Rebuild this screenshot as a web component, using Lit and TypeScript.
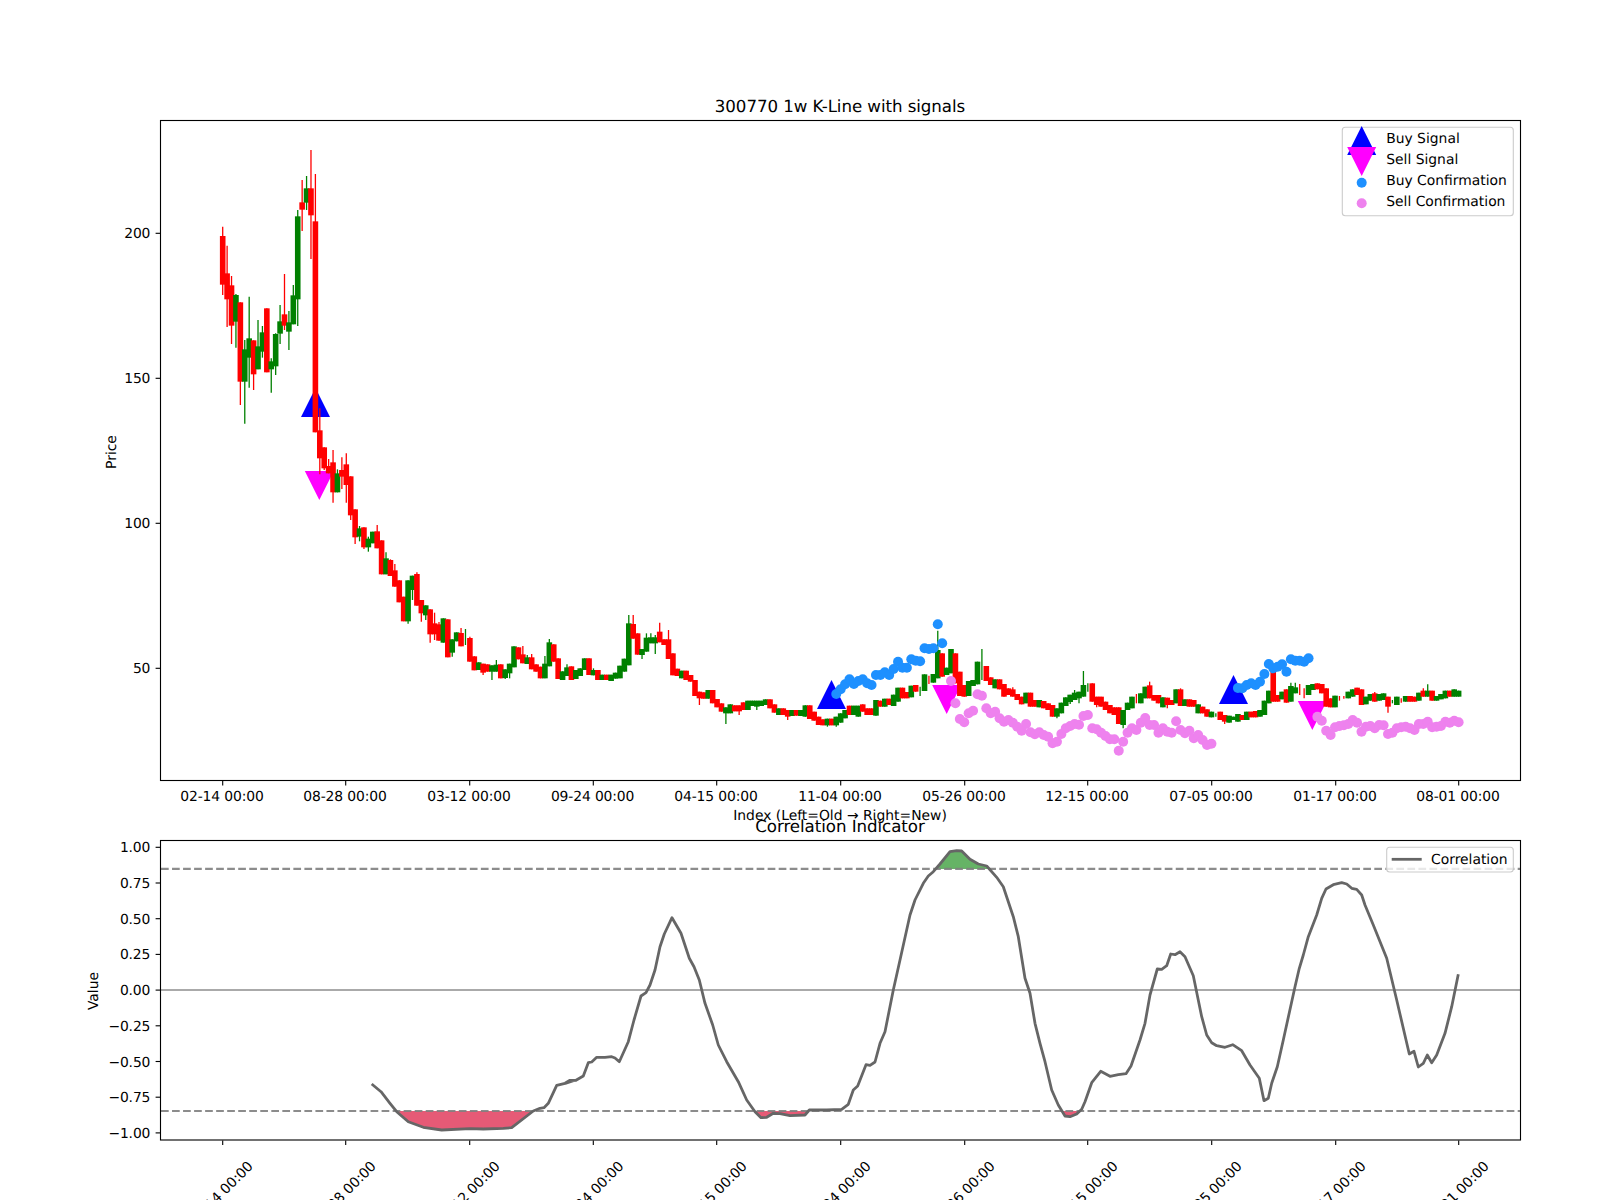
import { LitElement, html, svg, css } from "lit";
import { customElement } from "lit/decorators.js";

type Raw = [number, number, number, number?, number?];
const xAt = (i: number) => 222.7 + 4.414 * i;

// [red?, bodyTop, bodyBottom, wickTop, wickBottom] read off the chart; y in crop units (px = base + v / 3)
const A: Raw[] = [
  [1,438,584,410,615],[1,550,628,467,711],[1,586,707,558,762],[0,615,695,612,773],[1,637,875,637,945],
  [0,778,875,750,1001],[0,745,803,620,893],[1,751,853,751,900],[0,769,838,690,838],[0,727,785,708,803],
  [1,655,847],[0,814,838,805,908],[0,732,829,730,855],[0,694,731,645,762],[1,673,707,552,720],
  [0,697,725,663,780],[0,616,703,585,703],[0,379,628,360,708],[1,337,359,270,423],[0,295,338,258,360],
  [1,295,376,180,507],
];
const B: Raw[] = [
  [1,-476,157,-618,157],[1,151,235,85,283],[1,202,265,202,270],[1,258,280,237,280],[1,247,337,210,368],
  [0,280,337,268,337],[1,270,290,232,327],[1,253,315,220,368],[1,289,406,289,420],[1,388,472,388,492],
  [0,445,470,438,484],[1,442,502,442,507],[0,476,502,470,515],[0,455,490],[1,454,505,435,505],
  [1,481,583],[0,535,583,517,583],[1,540,588,538,588],[1,571,620,552,620],[1,601,667],
  [1,650,724],[0,601,724,601,731],[0,587,630,587,660],[1,582,677,577,677],[1,660,700,660,725],
  [0,676,706,676,720],[1,688,763,688,788],[1,730,763,698,780],[1,733,782,726,782],[0,715,788],
  [1,718,832],[0,778,818,778,830],[0,757,784],[1,759,799,744,799],[0,770,770,747,795],
  [1,774,845,770,845],[1,829,871],[0,847,870],[1,851,878,851,885],[1,853,875],
  [0,856,875,856,900],[0,854,875,840,875],[1,853,895],[0,868,894,868,897],[0,851,880,851,895],
  [0,799,862],[1,802,838],[1,823,850,798,850],[0,832,852,825,852],[1,832,868,822,868],
  [1,853,875],[1,860,895],[0,851,895,828,895],[0,787,859,777,859],[1,793,845],
  [1,835,897],[0,874,900],[0,862,888,853,888],[1,859,900],[0,870,897],
  [0,865,888],[0,835,870],[1,835,885],[0,870,886,865,886],[1,870,900],
];
const C: Raw[] = [
  [0,224,240],[1,224,240],[0,224,243],[0,218,236],[0,197,235],[0,176,215],[0,70,196,45,196],[1,72,116,45,116],
  [1,100,164],[0,147,165,147,177],[0,113,155,100,155],[0,112,130,100,130],[0,112,130,105,162],[1,95,127,68,127],[1,118,135],[1,118,177,90,177],
  [1,160,226],[1,206,228],[0,212,235],[1,212,240],[1,225,245],[1,240,288],[1,275,295,275,315],[1,277,296],
  [0,270,296],[1,270,310],[1,297,322],[1,310,335],[0,322,340,322,372],[0,313,340],[1,316,334],[1,316,334,316,345],
  [1,307,330],[0,302,330],[0,302,318],[0,302,320,302,330],[0,302,318],[0,298,315],[1,298,325],[1,313,338],
  [0,325,345],[1,325,345],[1,330,350,330,360],[0,330,348],[1,330,347],[0,330,348],[0,316,350],[1,316,357],
  [1,335,362],[1,350,375],[1,358,376],[0,356,376,356,380],[1,356,376],[0,350,376,350,380],[0,340,368],[0,330,355],
  [1,317,345],[0,317,345],[0,317,350],[1,313,335],[1,325,345],[1,325,345],[0,300,347],[1,302,320],
  [0,296,320],[1,296,315],[0,284,318],[0,263,305],[1,263,295],[1,276,295],[0,257,292],[1,255,275],
  [0,270,270,260,288],[0,223,273],[1,240,240,227,252],[0,222,248],[0,150,235,92,235],[1,160,230],[0,203,225],[0,147,220],
  [1,160,250],[1,215,288],[1,255,290],[0,243,288],[0,240,258],[0,185,253],[0,200,200,147,240],[1,198,243],
  [1,232,255],[0,238,265],
];
const D: Raw[] = [
  [1,238,268],[1,252,290],[1,265,285],[1,268,290,262,290],[1,282,300],[1,290,313],[0,278,310],[1,278,320],
  [1,300,320],[0,300,322],[1,303,325],[1,310,330],[1,315,350],[0,325,350,325,355],[0,308,340],[0,292,318],
  [0,284,306,284,312],[0,278,300,270,300],[0,275,295,275,310],[0,255,290,213,290],[0,262,262,250,275],[1,250,305],[1,290,315,290,322],[1,290,320],
  [1,305,330],[1,315,340],[1,322,345],[1,322,372],[0,330,375,330,385],[0,308,330],[0,290,325],[1,295,295,282,310],
  [0,280,310],[0,260,295],[1,256,295,245,295],[1,285,302],[1,285,310],[0,292,322],[1,293,315,293,325],[1,300,315],
  [0,268,310],[1,268,318,265,318],[0,298,318],[1,298,320],[1,300,320],[0,313,340],[1,320,340],[1,328,350],
  [0,335,352],[0,345,345,340,350],[1,335,360],[1,345,365,345,372],[0,347,368],[0,350,360],[0,342,365],[1,345,360],
  [0,335,360],[1,335,352],[1,333,352],[0,330,350],[0,302,345],[0,272,310],[1,210,305],[1,285,305],
  [0,275,298],[1,268,308],[0,258,305,248,305],[0,262,280,248,280],[1,270,270,252,285],[1,280,280,265,295],[0,255,285],[0,252,270],
  [1,250,268],[1,252,280],[1,265,320],[1,295,322],[0,287,322],[1,295,295,288,302],[1,292,292,288,296],[0,275,295],
  [0,268,290],[1,263,285],[1,268,315],[0,290,313],[0,282,302],[1,280,305,276,305],[0,282,302],[0,280,300],
  [1,290,320,290,338],[0,305,305,300,310],[0,290,315],[1,300,300,295,308],[0,288,305],[1,288,305],[1,290,305],[0,278,302],
  [1,272,290,265,290],[0,272,290,253,290],[1,272,302],[0,288,302],[0,282,298],[0,272,295],[1,272,290],[0,268,290],
  [0,272,290],
];

const candles = [
  ...A.map((c, i) => ({ c, i, base: 90 })),
  ...B.map((c, i) => ({ c, i: i + 21, base: 380 })),
  ...C.map((c, i) => ({ c, i: i + 86, base: 600 })),
  ...D.map((c, i) => ({ c, i: i + 176, base: 600 })),
].map(({ c, i, base }) => {
  const [red, t, b, wt, wb] = c;
  return {
    red: !!red,
    x: xAt(i),
    top: base + t / 3,
    bottom: base + b / 3,
    wTop: base + (wt ?? t) / 3,
    wBottom: base + (wb ?? b) / 3,
  };
});

const dots = (from: number, ys: number[]) => ys.map((v, k) => [xAt(from + k), 600 + v / 3]);
const buyDots = [
  ...dots(139, [282,268,253,238,252,243,238,250,255,225,225,217,225,207,185,203,203,178,182,184,145,147,145,73,130]),
  ...dots(230, [264,265,255,250,255,245,222,192,205,200,193,215,178,182,182,185,175]),
];
const sellDots = [
  ...dots(165, [243,310,357,367,340,332,283,287,325,340,335]),
  ...dots(176, [355,365,360,368,380,392,372,397,403,397,405,410,430,425,402,385,378,372,374,348,345,385,388,398,408,418,418,452,425,398,385,390,368,354,375,375,398,385,395,398,364,390,400,392,415,405,420,435,431]),
  ...dots(248, [350,362,392,405,382,378,376,372,360,368,395,380,378,385,375,376,402,398,385,382,380,385,390,372,372,365,382,380,378,365,368,362,367]),
];

const conv = (ox: number, pts: number[][]) => pts.map(([x, y]) => [ox + x / 3, 790 + y / 3]);
const corr = [
  ...conv(80, [[875,882],[903,905],[930,940],[950,965],[985,995],[1030,1012],[1085,1020],[1170,1016],[1210,1017],[1270,1015],[1295,1013],[1360,963],[1380,955],[1392,953],[1405,940],[1430,886],[1455,880],[1470,871],[1485,871]]),
  ...conv(560, [[18,880],[30,872],[48,871],[70,858],[85,818],[95,816],[110,802],[135,802],[155,800],[165,804],[178,815],[205,755],[222,690],[243,618],[258,608],[270,585],[285,540],[300,470],[313,432],[336,383],[363,430],[388,505],[402,530],[418,570],[435,640],[458,705],[475,765],[500,815],[535,875],[560,930],[585,965],[603,983],[620,982],[640,970],[660,971],[690,977],[735,975],[748,960],[800,960],[845,958],[865,943],[880,900],[893,888],[918,824],[930,826],[945,816],[960,760],[975,725],[1000,600],[1020,510],[1050,375],[1065,330],[1090,280],[1105,258],[1120,245],[1140,222],[1170,185],[1190,182],[1205,183],[1230,208],[1255,222],[1280,228],[1310,262],[1330,290],[1360,380],[1375,440],[1395,565],[1410,610],[1425,700]]),
  ...conv(1040, [[0,760],[15,815],[35,900],[55,945],[75,978],[90,980],[110,972],[125,958],[135,935],[155,878],[182,844],[210,859],[235,854],[258,851],[273,828],[300,750],[315,700],[330,615],[352,537],[365,538],[380,527],[392,492],[405,494],[420,485],[435,500],[460,557],[485,680],[500,735],[515,758],[530,767],[555,772],[578,764],[605,782],[630,825],[658,865],[672,932],[685,925],[695,880],[712,830],[730,750],[765,590],[778,535],[790,495],[805,440],[830,375],[845,325],[858,297],[880,284],[905,278],[920,282],[935,295],[950,298],[965,315],[975,345],[1000,405],[1040,505],[1070,630],[1108,792],[1122,784],[1135,831],[1150,820],[1162,795],[1175,818],[1190,795],[1215,730],[1235,650],[1255,553]]),
];
const pl = (p: number[][]) => p.map((q) => q.map((n) => n.toFixed(1)).join(",")).join(" ");

// Parts of the curve beyond a threshold, closed along the threshold line.
function beyond(pts: number[][], th: number, below: boolean): number[][][] {
  const out: number[][][] = [];
  let run: number[][] | null = null;
  const isIn = (y: number) => (below ? y > th : y < th);
  for (let k = 0; k < pts.length; k++) {
    const [x, y] = pts[k];
    if (isIn(y)) {
      if (!run) {
        const [px, py] = pts[k - 1];
        run = [[px + ((th - py) / (y - py)) * (x - px), th]];
      }
      run.push([x, y]);
    } else if (run) {
      const [px, py] = pts[k - 1];
      run.push([px + ((th - py) / (y - py)) * (x - px), th]);
      out.push(run);
      run = null;
    }
  }
  return out;
}
const Y_HI = 868.9;
const Y_LO = 1111;
const redFills = beyond(corr, Y_LO, true);
const greenFills = beyond(corr, Y_HI, false);

const ticks = [222.7, 345.7, 469.7, 593.3, 716.7, 840.7, 964.7, 1087.7, 1211.7, 1335.7, 1458.7];
const dates = ["02-14", "08-28", "03-12", "09-24", "04-15", "11-04", "05-26", "12-15", "07-05", "01-17", "08-01"];
const priceTicks: [string, number][] = [["200", 233.3], ["150", 378.3], ["100", 523.3], ["50", 668.3]];
const corrTicks = ["1.00", "0.75", "0.50", "0.25", "0.00", "\u22120.25", "\u22120.50", "\u22120.75", "\u22121.00"];

const up = (x: number, apex: number) => `${x},${apex} ${x + 14.5},${apex + 29} ${x - 14.5},${apex + 29}`;
const down = (x: number, top: number) => `${x - 14.5},${top} ${x + 14.5},${top} ${x},${top + 29}`;

@customElement("app-root")
export class AppRoot extends LitElement {
  static styles = css`
    :host { display: block; width: 1600px; height: 1200px; background: #fff; }
    svg { display: block; }
    text { font-family: "DejaVu Sans", sans-serif; font-size: 13.89px; fill: #000; text-rendering: geometricPrecision; }
    .title { font-size: 16.67px; letter-spacing: -0.06px; }
    .num { letter-spacing: -0.12px; }
    .mid { text-anchor: middle; }
    .end { text-anchor: end; }
    .frame { fill: none; stroke: #000; stroke-width: 1.11; }
    .tick { stroke: #000; stroke-width: 1.11; }
    .wick { stroke-width: 1.3; }
    .red { fill: #f00; stroke: #f00; }
    .green { fill: #008000; stroke: #008000; }
    .body { stroke: none; }
    .buy { fill: #00f; }
    .sell { fill: #f0f; }
    .bdot { fill: #1e90ff; }
    .sdot { fill: #ee82ee; }
    .legend { fill: #fff; fill-opacity: 0.8; stroke: #ccc; stroke-width: 1.11; }
    .dash { stroke: #808080; stroke-opacity: 0.9; stroke-width: 2.08; stroke-dasharray: 7.7 3.33; }
    .zero { stroke: #aaa; stroke-width: 2.08; }
    .curve { fill: none; stroke: #666; stroke-width: 2.78; stroke-linejoin: round; }
    .fr { fill: #e65a76; }
    .fg { fill: #66b366; }
  `;

  render() {
    return html`<svg width="1600" height="1200" viewBox="0 0 1600 1200">
      <text class="title mid" x="840" y="111.7">300770 1w K-Line with signals</text>

      ${[up(315.5, 388), up(831.5, 680), up(1233.5, 675)].map((p) => svg`<polygon class="buy" points=${p}></polygon>`)}
      ${[down(319.3, 471), down(946.7, 685), down(1312.3, 701)].map((p) => svg`<polygon class="sell" points=${p}></polygon>`)}

      ${candles.map((c) => {
        const k = c.red ? "red" : "green";
        return svg`<line class="wick ${k}" x1=${c.x} x2=${c.x} y1=${c.wTop} y2=${c.wBottom}></line>${
          c.bottom > c.top
            ? svg`<rect class="body ${k}" x=${c.x - 2.8} y=${c.top} width="5.6" height=${c.bottom - c.top}></rect>`
            : ""
        }`;
      })}
      ${buyDots.map(([x, y]) => svg`<circle class="bdot" cx=${x} cy=${y} r="5"></circle>`)}
      ${sellDots.map(([x, y]) => svg`<circle class="sdot" cx=${x} cy=${y} r="5"></circle>`)}

      <rect class="frame" x="160.5" y="120.5" width="1360" height="660"></rect>
      ${ticks.map((x, i) => svg`<line class="tick" x1=${x} x2=${x} y1="781" y2="785.4"></line>
        <text class="mid num" x=${x - 0.7} y="801">${dates[i]} 00:00</text>`)}
      ${priceTicks.map(([t, y]) => svg`<line class="tick" x1="155.6" x2="160" y1=${y} y2=${y}></line>
        <text class="end num" x="150.3" y=${y + 5}>${t}</text>`)}
      <text class="mid" transform="rotate(-90 111 452)" x="111" y="457">Price</text>
      <text class="mid" x="840" y="820">Index (Left=Old → Right=New)</text>

      <rect class="legend" x="1342.3" y="127.3" width="171" height="88.4" rx="3"></rect>
      <polygon class="buy" points=${up(1361.7, 126)}></polygon>
      <polygon class="sell" points=${down(1361.7, 147)}></polygon>
      <circle class="bdot" cx="1361.7" cy="182.7" r="5"></circle>
      <circle class="sdot" cx="1361.7" cy="203.3" r="5"></circle>
      <text x="1386.2" y="143.3">Buy Signal</text>
      <text x="1386.2" y="164.3">Sell Signal</text>
      <text x="1386.2" y="185.3">Buy Confirmation</text>
      <text x="1386.2" y="206.3">Sell Confirmation</text>

      <text class="title mid" x="840" y="832">Correlation Indicator</text>
      ${redFills.map((p) => svg`<polygon class="fr" points=${pl(p)}></polygon>`)}
      ${greenFills.map((p) => svg`<polygon class="fg" points=${pl(p)}></polygon>`)}
      <line class="dash" x1="161" x2="1520" y1=${Y_HI} y2=${Y_HI}></line>
      <line class="dash" x1="161" x2="1520" y1=${Y_LO} y2=${Y_LO}></line>
      <line class="zero" x1="161" x2="1520" y1="990" y2="990"></line>
      <polyline class="curve" points=${pl(corr)}></polyline>
      <rect class="frame" x="160.5" y="840.5" width="1360" height="299.5"></rect>
      ${ticks.map((x, i) => svg`<line class="tick" x1=${x} x2=${x} y1="1140.5" y2="1145"></line>
        <text class="mid num" transform="rotate(-45 ${x - 2} 1193)" x=${x - 2} y="1198">${dates[i]} 00:00</text>`)}
      ${corrTicks.map((t, i) => {
        const y = 847.3 + i * 35.7;
        return svg`<line class="tick" x1="155.6" x2="160" y1=${y} y2=${y}></line>
          <text class="end num" x="150.3" y=${y + 5}>${t}</text>`;
      })}
      <text class="mid" transform="rotate(-90 93.3 991)" x="93.3" y="996">Value</text>

      <rect class="legend" x="1386.7" y="847.3" width="126.6" height="24.7" rx="3"></rect>
      <line class="curve" x1="1391.7" x2="1421.7" y1="859.3" y2="859.3"></line>
      <text x="1431" y="864">Correlation</text>
    </svg>`;
  }
}
